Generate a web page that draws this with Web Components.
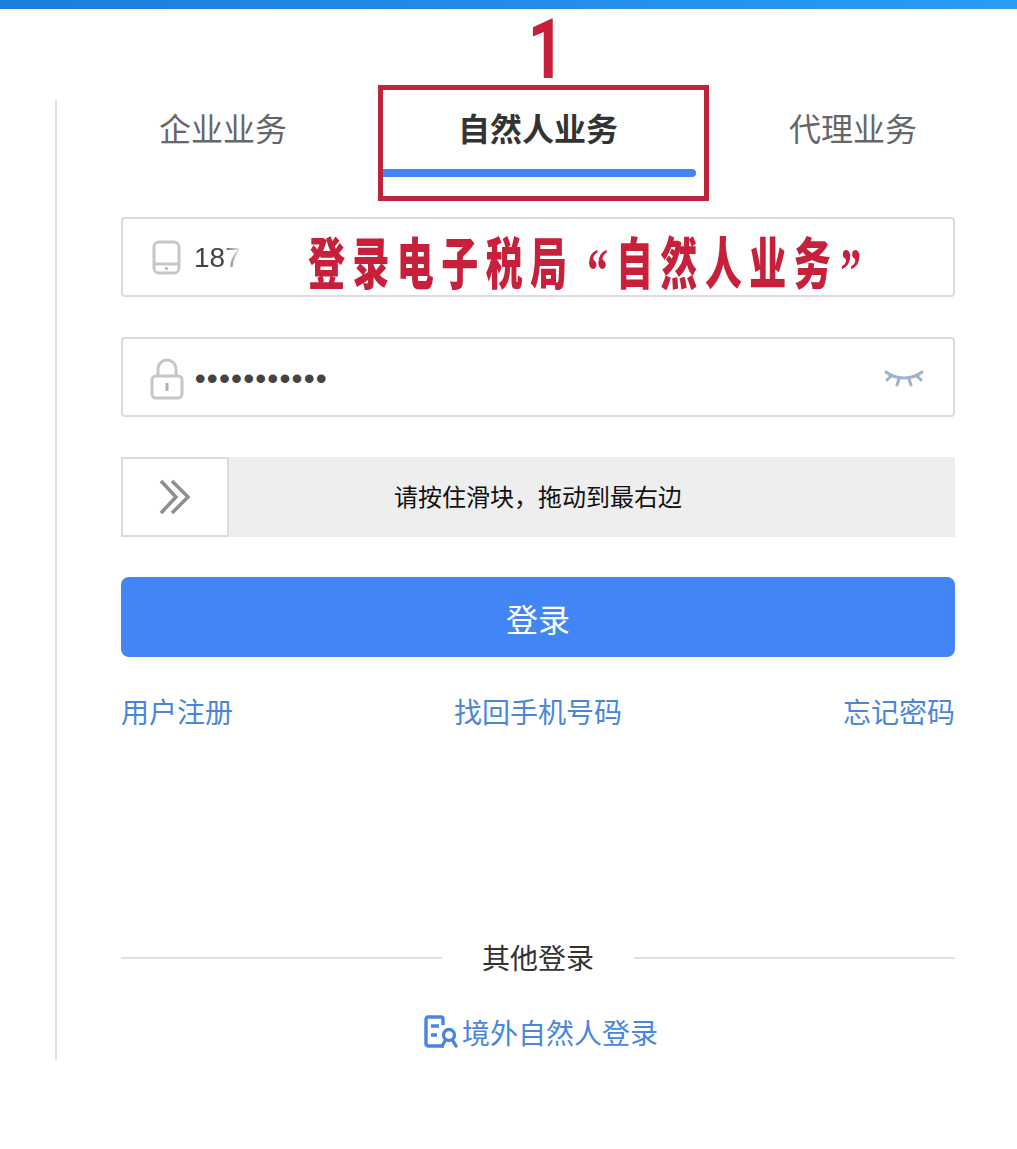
<!DOCTYPE html>
<html lang="zh">
<head>
<meta charset="utf-8">
<title>登录</title>
<style>
  html, body { margin: 0; background: #fff; }
  body { font-family: "Noto Sans CJK SC", "Liberation Sans", sans-serif; }
</style>
</head>
<body>
<login-page>
  <login-panel>
    <tab-bar>
      <tab-item>企业业务</tab-item>
      <tab-item active>自然人业务</tab-item>
      <tab-item>代理业务</tab-item>
    </tab-bar>
    <text-field value="187" fade>
      <svg slot="icon" width="30" height="36" viewBox="0 0 30 36" fill="none" stroke="#c6c6c6" stroke-width="3">
        <rect x="3" y="2" width="25" height="31" rx="5"/>
        <path d="M3 24h25"/>
        <circle cx="15.500" cy="28.600" r="1.500" fill="#b0b0b0" stroke="none"/>
      </svg>
    </text-field>
    <text-field value="•••••••••••" password>
      <svg slot="icon" width="34" height="42" viewBox="0 0 34 42" fill="none" stroke="#c6c6c6" stroke-width="3">
        <path d="M8 19v-8a9 9 0 0 1 18 0v8"/>
        <rect x="2" y="18" width="30" height="22" rx="4"/>
        <path d="M17 25v8" stroke-width="3" stroke="#b0b0b0"/>
      </svg>
      <svg slot="trailing" width="40" height="20" viewBox="0 0 40 20" fill="none" stroke="#9db4c8" stroke-width="3" stroke-linecap="round">
        <path d="M2 3c10 8 26 8 36 0"/>
        <path d="M7 7 3 11M15 10l-2 6M25 10l2 6M33 7l4 4"/>
      </svg>
    </text-field>
    <slide-verify>请按住滑块，拖动到最右边</slide-verify>
    <login-button>登录</login-button>
    <link-row>
      <span>用户注册</span>
      <span>找回手机号码</span>
      <span>忘记密码</span>
    </link-row>
    <other-login>其他登录</other-login>
    <overseas-link>境外自然人登录</overseas-link>
  </login-panel>
  <step-note></step-note>
</login-page>

<script>
// small helper so every element gets its own open shadow root
function shadow(el, html) {
  el.attachShadow({ mode: 'open' }).innerHTML = html;
}

class LoginPage extends HTMLElement {
  constructor() {
    super();
    shadow(this, `
      <style>
        :host { display: block; position: relative; width: 1017px; height: 1149px; overflow: hidden; background: #fff; }
        .bar { height: 9px; background: linear-gradient(90deg, #1a7ee0, #2a9cf2); }
        .body { padding: 91px 0 0 55px; }
      </style>
      <div class="bar"></div>
      <div class="body"><slot></slot></div>
    `);
  }
}

class LoginPanel extends HTMLElement {
  constructor() {
    super();
    shadow(this, `
      <style>
        :host { display: block; box-sizing: border-box; width: 900px; height: 960px; border-left: 2px solid #e0e0e0; padding-left: 64px; }
      </style>
      <slot></slot>
    `);
  }
}

class TabBar extends HTMLElement {
  constructor() {
    super();
    shadow(this, `
      <style>
        :host { display: grid; grid-template-columns: repeat(3, 315px); margin-left: -55.5px; height: 117px; }
      </style>
      <slot></slot>
    `);
  }
}

class TabItem extends HTMLElement {
  constructor() {
    super();
    shadow(this, `
      <style>
        :host { display: flex; flex-direction: column; align-items: center; position: relative; padding-top: 4px; font-size: 32px; line-height: 46px; color: #666; }
        :host([active]) { color: #333; font-weight: 700; }
        .line { display: none; position: absolute; left: 2.5px; top: 69px; width: 313px; height: 8px; border-radius: 0 4px 4px 0; background: #4285f4; }
        :host([active]) .line { display: block; }
      </style>
      <slot></slot>
      <div class="line"></div>
    `);
  }
}

class TextField extends HTMLElement {
  constructor() {
    super();
    shadow(this, `
      <style>
        :host { display: flex; align-items: center; box-sizing: border-box; height: 80px; margin-bottom: 40px; border: 2px solid #dcdcdc; border-radius: 4px; padding: 2px 29px 0 0; }
        :host([password]) { padding-top: 4px; }
        .icon { flex: none; box-sizing: border-box; width: 71px; display: flex; padding-left: 28px; }
        :host([password]) .icon { padding-left: 27px; }
        ::slotted(svg) { filter: blur(.4px); }
        .value { flex: 1; font-family: "Liberation Sans", sans-serif; font-size: 28px; color: #444; white-space: nowrap; }
        :host([fade]) .value span { -webkit-mask-image: linear-gradient(90deg, #000 60%, transparent 100%); mask-image: linear-gradient(90deg, #000 60%, transparent 100%); }
        :host([password]) .value { font-size: 30px; letter-spacing: 1.600px; font-weight: 700; padding-left: 1px; }
        span { display: inline-block; }
      </style>
      <div class="icon"><slot name="icon"></slot></div>
      <div class="value"><span></span></div>
      <slot name="trailing"></slot>
    `);
  }
  connectedCallback() {
    this.shadowRoot.querySelector('.value span').textContent = this.getAttribute('value');
  }
}

class SlideVerify extends HTMLElement {
  constructor() {
    super();
    shadow(this, `
      <style>
        :host { display: flex; align-items: center; justify-content: center; position: relative; box-sizing: border-box; height: 80px; margin-bottom: 40px; padding-bottom: 4px; background: #eee; font-size: 24px; color: #111; }
        .handle { position: absolute; left: 0; top: 0; box-sizing: border-box; width: 108px; height: 80px; border: 2px solid #dcdcdc; background: #fff; display: flex; align-items: center; justify-content: center; }
        svg { filter: blur(.5px); }
      </style>
      <div class="handle">
        <svg width="34" height="36" viewBox="0 0 34 36" fill="none" stroke="#8e8e8e" stroke-width="3.500">
          <path d="M3 2 18 18 3 34M14 2 30 18 14 34"/>
        </svg>
      </div>
      <slot></slot>
    `);
  }
}

class LoginButton extends HTMLElement {
  constructor() {
    super();
    shadow(this, `
      <style>
        :host { display: flex; align-items: center; justify-content: center; box-sizing: border-box; height: 80px; padding-top: 2px; border-radius: 8px; background: #4285f4; color: #fff; font-size: 32px; }
      </style>
      <slot></slot>
    `);
  }
}

class LinkRow extends HTMLElement {
  constructor() {
    super();
    shadow(this, `
      <style>
        :host { display: flex; justify-content: space-between; margin-top: 34px; font-size: 28px; line-height: 40px; color: #4a86dc; }
      </style>
      <slot></slot>
    `);
  }
}

class OtherLogin extends HTMLElement {
  constructor() {
    super();
    shadow(this, `
      <style>
        :host { display: flex; align-items: center; margin-top: 206px; font-size: 28px; line-height: 40px; color: #333; }
        i { flex: 1; height: 2px; background: #e0e0e0; }
        span { padding: 0 40px 2px; }
      </style>
      <i></i><span><slot></slot></span><i></i>
    `);
  }
}

class OverseasLink extends HTMLElement {
  constructor() {
    super();
    shadow(this, `
      <style>
        :host { display: flex; align-items: center; justify-content: center; gap: 4px; margin-top: 33px; padding-left: 6px; font-size: 28px; line-height: 40px; color: #4a86dc; }
      </style>
      <svg width="34" height="34" viewBox="0 0 34 34" fill="none" stroke="#4a86dc" stroke-width="3.400">
        <path d="M20 31H4a2 2 0 0 1-2-2V4a2 2 0 0 1 2-2h13a2 2 0 0 1 2 2v6"/>
        <path d="M7 11h8M7 20h6"/>
        <circle cx="25" cy="20" r="5.500"/>
        <path d="M21 26l-3 5M29 26l3 5" stroke-linecap="round"/>
      </svg>
      <slot></slot>
    `);
  }
}

// the red marks someone drew over the screenshot
class StepNote extends HTMLElement {
  constructor() {
    super();
    shadow(this, `
      <style>
        :host { display: block; color: #c8203a; font-family: "Noto Sans CJK SC", sans-serif; }
        .num { position: absolute; left: 521px; top: 8px; width: 50px; text-align: center; font: 700 84px/84px Roboto, sans-serif; transform: scaleX(.76); }
        .frame { position: absolute; left: 378px; top: 85px; width: 331px; height: 116px; box-sizing: border-box; border: 5px solid #c0243c; }
        .caption { position: absolute; left: 308px; top: 220px; display: flex; align-items: flex-start; transform: scaleX(.66); transform-origin: 0 0; font-size: 56px; line-height: 80px; font-weight: 900; letter-spacing: 11.300px; white-space: nowrap; }
        .q { font-family: "Liberation Serif", serif; font-size: 64px; font-weight: 700; letter-spacing: 0; margin-top: 11px; }
        .q.open { margin-left: 19px; margin-right: 12px; }
        .q.close { margin-left: 3px; }
      </style>
      <div class="num">1</div>
      <div class="frame"></div>
      <div class="caption"><span>登录电子税局</span><span class="q open">“</span><span>自然人业务</span><span class="q close">”</span></div>
    `);
  }
}

customElements.define('login-page', LoginPage);
customElements.define('login-panel', LoginPanel);
customElements.define('tab-bar', TabBar);
customElements.define('tab-item', TabItem);
customElements.define('text-field', TextField);
customElements.define('slide-verify', SlideVerify);
customElements.define('login-button', LoginButton);
customElements.define('link-row', LinkRow);
customElements.define('other-login', OtherLogin);
customElements.define('overseas-link', OverseasLink);
customElements.define('step-note', StepNote);
</script>
</body>
</html>
